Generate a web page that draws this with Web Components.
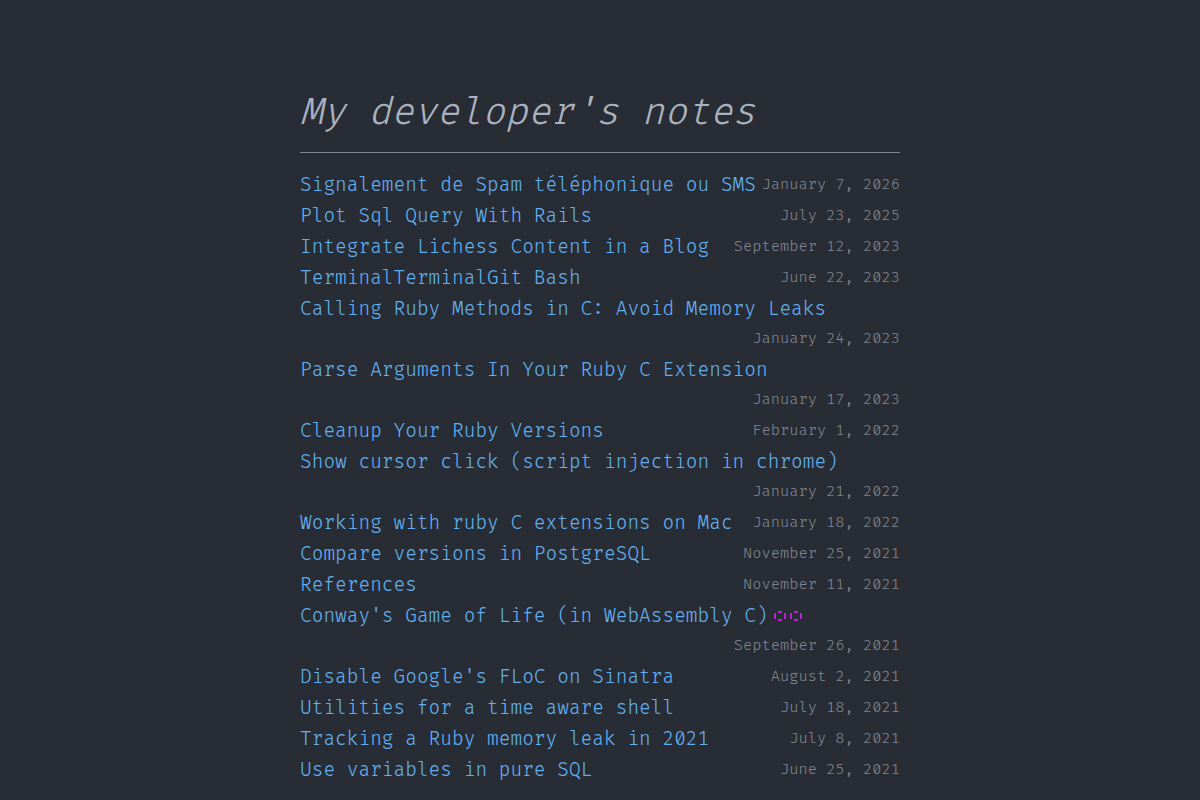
<!DOCTYPE html>
<html lang="en">
<head>
<meta charset="utf-8">
<meta name="viewport" content="width=device-width, initial-scale=1">
<title>My developer's notes</title>
<style>
body { margin: 0; background: #282c34; color: #abb2bf; font-family: "Fira Code", "Liberation Mono", monospace; font-weight: 300; }
</style>
</head>
<body>
<notes-page>
  <span slot="title">My developer's notes</span>
  <note-entry date="January 7, 2026">Signalement de Spam téléphonique ou SMS</note-entry>
  <note-entry date="July 23, 2025">Plot Sql Query With Rails</note-entry>
  <note-entry date="September 12, 2023">Integrate Lichess Content in a Blog</note-entry>
  <note-entry date="June 22, 2023">TerminalTerminalGit Bash</note-entry>
  <note-entry date="January 24, 2023">Calling Ruby Methods in C: Avoid Memory Leaks</note-entry>
  <note-entry date="January 17, 2023">Parse Arguments In Your Ruby C Extension</note-entry>
  <note-entry date="February 1, 2022">Cleanup Your Ruby Versions</note-entry>
  <note-entry date="January 21, 2022">Show cursor click (script injection in chrome)</note-entry>
  <note-entry date="January 18, 2022">Working with ruby C extensions on Mac</note-entry>
  <note-entry date="November 25, 2021">Compare versions in PostgreSQL</note-entry>
  <note-entry date="November 11, 2021">References</note-entry>
  <note-entry date="September 26, 2021">Conway's Game of Life (in WebAssembly C)<life-cells slot="icon"></life-cells></note-entry>
  <note-entry date="August 2, 2021">Disable Google's FLoC on Sinatra</note-entry>
  <note-entry date="July 18, 2021">Utilities for a time aware shell</note-entry>
  <note-entry date="July 8, 2021">Tracking a Ruby memory leak in 2021</note-entry>
  <note-entry date="June 25, 2021">Use variables in pure SQL</note-entry>
</notes-page>

<template id="page-template">
  <style>
    :host { display: block; max-width: 600px; margin: 0 auto; padding: 80px 16px 16px; }
    h1 { margin: 0; padding-bottom: 6px; border-bottom: 1px solid #7f848e; font-size: 37px; font-weight: 300; font-style: italic; line-height: 66px; }
    .notes { display: flex; flex-direction: column; gap: 1px; padding-top: 17px; }
  </style>
  <main>
    <h1><slot name="title"></slot></h1>
    <div class="notes" role="list"><slot></slot></div>
  </main>
</template>

<template id="entry-template">
  <style>
    :host { display: flex; flex-wrap: wrap; column-gap: 4px; line-height: 30px; }
    .title { display: flex; align-items: center; gap: 6px; }
    a { color: #61afef; font-size: 19px; text-decoration: none; }
    a:hover { text-decoration: underline; }
    time { margin-left: auto; color: #7f848e; font-size: 15px; }
  </style>
  <span class="title"><a href="#"><slot></slot></a><slot name="icon"></slot></span>
  <time></time>
</template>

<template id="cells-template">
  <style>
    :host { display: block; }
    svg { display: block; }
  </style>
  <svg width="28" height="10" viewBox="0 0 28 10" fill="#bd1fd6" shape-rendering="crispEdges" aria-hidden="true">
    <path d="M4 0h4v2H4zM0 2h2v6H0zM10 2h2v6h-2zM4 8h4v2H4zM20 0h4v2h-4zM16 2h2v6h-2zM26 2h2v6h-2zM20 8h4v2h-4z"/>
  </svg>
</template>

<script>
class TemplateElement extends HTMLElement {
  constructor() {
    super();
    const template = document.getElementById(this.constructor.template);
    this.attachShadow({ mode: "open" }).append(template.content.cloneNode(true));
  }
}
class NotesPage extends TemplateElement {
  static template = "page-template";
}
class NoteEntry extends TemplateElement {
  static template = "entry-template";
  connectedCallback() {
    this.setAttribute("role", "listitem");
    this.shadowRoot.querySelector("time").textContent = this.getAttribute("date");
  }
}
class LifeCells extends TemplateElement {
  static template = "cells-template";
}
customElements.define("notes-page", NotesPage);
customElements.define("note-entry", NoteEntry);
customElements.define("life-cells", LifeCells);
</script>
</body>
</html>
